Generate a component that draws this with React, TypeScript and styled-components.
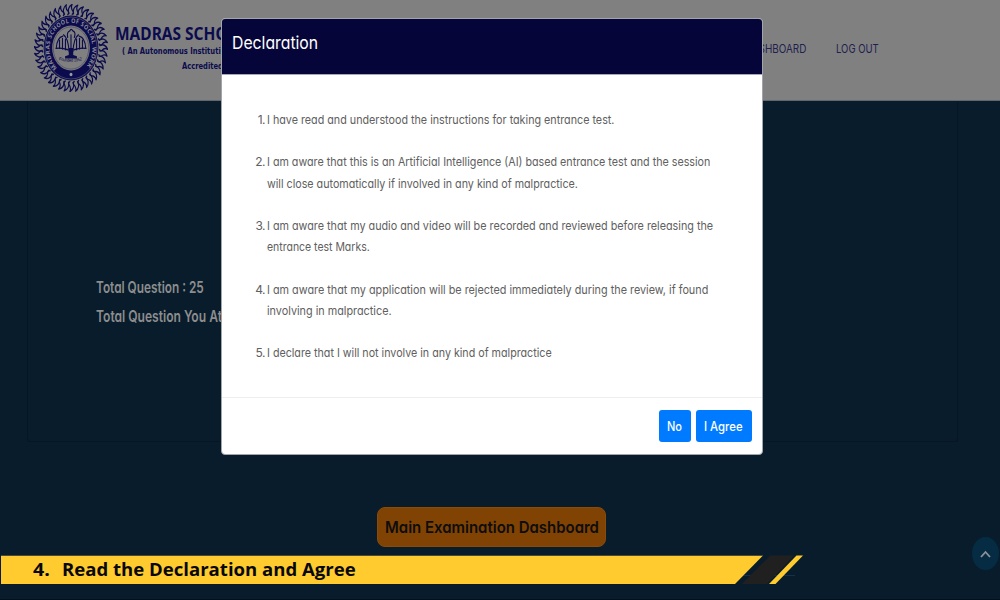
import React, { useLayoutEffect, useRef, useState } from "react";
import styled, { createGlobalStyle } from "styled-components";

const navy = "#0b0b4d";

const GlobalStyle = createGlobalStyle`
  *, *::before, *::after { box-sizing: border-box; }
  body { margin: 0; background: #081c2c; }
`;

const Page = styled.div`
  position: relative;
  width: 1000px;
  height: 600px;
  overflow: hidden;
  display: flex;
  flex-direction: column;
  background: #081c2c;
  border-bottom: 1px solid #030f1c;
  font-family: Inter, "Liberation Sans", sans-serif;
  font-feature-settings: "cv11" 1;
`;

/* Text set to a fixed measure by condensing the glyphs horizontally */
const Measure = styled.span<{ $width: number }>`
  display: block;
  width: ${(p) => p.$width}px;
  white-space: nowrap;
`;
const Glyphs = styled.span`
  display: inline-block;
  transform-origin: 0 50%;
`;

function Fit({ width, children }: { width: number; children: string }) {
  const ref = useRef<HTMLSpanElement>(null);
  const [scale, setScale] = useState(1);
  useLayoutEffect(() => {
    const update = () => {
      if (ref.current) setScale(width / ref.current.offsetWidth);
    };
    update();
    document.fonts?.ready.then(update);
  }, [width, children]);
  return (
    <Measure $width={width}>
      <Glyphs ref={ref} style={{ transform: `scaleX(${scale})` }}>
        {children}
      </Glyphs>
    </Measure>
  );
}

const Header = styled.header`
  flex: none;
  height: 101px;
  display: flex;
  align-items: flex-start;
  background: #808080;
  border-bottom: 1px solid #5f686e;
  padding-left: 34px;
`;

const EmblemSvg = styled.svg`
  flex: none;
  width: 74px;
  height: 88px;
  margin-top: 4px;
`;

const School = styled.div`
  flex: none;
  width: 115px;
  margin: 23px 0 0 7px;
  color: ${navy};
  font-family: "Noto Sans", "Open Sans", sans-serif;
  font-weight: 700;
`;
const SchoolName = styled.div`
  font-size: 18.5px;
  line-height: 20px;
`;
const SchoolNote = styled.div<{ $indent: number; $gap: number }>`
  margin: ${(p) => p.$gap}px 0 0 ${(p) => p.$indent}px;
  font-family: "DejaVu Sans Condensed", "DejaVu Sans", sans-serif;
  font-size: 9.5px;
  line-height: 12px;
`;

const Nav = styled.nav`
  display: flex;
  gap: 30px;
  margin: 41px 0 0 515px;
  color: #20204f;
  font-size: 11.5px;
  line-height: 16px;
`;

const Card = styled.section`
  flex: none;
  width: 931px;
  height: 341px;
  margin-left: 27px;
  padding: 172px 0 0 68px;
  border: 1px solid #071624;
  border-top: 0;
  border-radius: 0 0 3px 3px;
  color: #8d8d8d;
  font-size: 16px;
  font-weight: 600;
  line-height: 29px;
`;

const ExamButton = styled.button`
  flex: none;
  width: 229px;
  height: 40px;
  margin: 65px 0 0 377px;
  padding: 0 0 0 7px;
  border: 1px solid #8c4a06;
  border-radius: 8px;
  background: #804303;
  color: #0e0d0d;
  font: 600 16.5px/39px Inter, sans-serif;
  font-feature-settings: inherit;
  text-align: left;
`;

const ScrollTop = styled.div`
  position: absolute;
  left: 972px;
  top: 537px;
  width: 27px;
  height: 33px;
  border-radius: 50%;
  background: #052c42;
  display: flex;
  align-items: center;
  justify-content: center;
`;

const Dialog = styled.div`
  position: absolute;
  left: 221px;
  top: 18px;
  width: 542px;
  height: 437px;
  display: flex;
  flex-direction: column;
  overflow: hidden;
  border: 1px solid #a3a5ac;
  border-radius: 4px;
  background: #fff;
`;
const DialogHead = styled.div`
  flex: none;
  height: 56px;
  padding: 12px 0 0 10px;
  border-bottom: 1px solid #a6a6bd;
  background: #05053a;
  color: #fff;
  font-size: 17.5px;
  line-height: 24px;
`;
const DialogBody = styled.div`
  flex: 1;
  padding: 34px 0 0 29px;
  color: #606060;
  font-size: 12.3px;
  line-height: 21.2px;
`;
const Clause = styled.div`
  display: flex;
  gap: 2px;
  margin-bottom: 21.2px;
`;
const Numeral = styled.div`
  width: 14px;
  font-size: 12px;
  letter-spacing: -0.5px;
  text-align: right;
`;
const DialogFoot = styled.div`
  flex: none;
  height: 57px;
  display: flex;
  justify-content: flex-end;
  align-items: flex-start;
  gap: 5px;
  padding: 12px 10px 0 0;
  border-top: 1px solid #eceeef;
`;
const Action = styled.button<{ $width: number }>`
  width: ${(p) => p.$width}px;
  height: 32px;
  padding: 1px 0 0 8px;
  border: 0;
  border-radius: 3px;
  background: #007bff;
  color: #fff;
  font: 500 12.5px/31px Inter, sans-serif;
  font-feature-settings: inherit;
  text-align: left;
`;

const Caption = styled.div`
  position: absolute;
  left: 1px;
  top: 555px;
  display: flex;
`;
const CaptionBar = styled.div`
  width: 734px;
  height: 29px;
  display: flex;
  gap: 12px;
  padding-left: 32px;
  border-top: 1px solid #4c4a33;
  background: #ffcb2f;
  color: #080808;
  font: 700 18.5px/26px "Open Sans", "Noto Sans", sans-serif;
`;

const clauses: { text: string; width: number }[][] = [
  [{ text: "I have read and understood the instructions for taking entrance test.", width: 347 }],
  [
    { text: "I am aware that this is an Artificial Intelligence (AI) based entrance test and the session", width: 443 },
    { text: "will close automatically if involved in any kind of malpractice.", width: 311 },
  ],
  [
    { text: "I am aware that my audio and video will be recorded and reviewed before releasing the", width: 446.5 },
    { text: "entrance test Marks.", width: 103 },
  ],
  [
    { text: "I am aware that my application will be rejected immediately during the review, if found", width: 441 },
    { text: "involving in malpractice.", width: 125 },
  ],
  [{ text: "I declare that I will not involve in any kind of malpractice", width: 284.5 }],
];

const flames = Array.from({ length: 40 }, (_, i) => i * 9);

function Emblem() {
  return (
    <EmblemSvg viewBox="0 0 200 200" preserveAspectRatio="none">
      <defs>
        <path id="ring" d="M62.5 145 A58 58 0 1 1 137.5 145" />
        <path id="bowl" d="M67 127 Q100 136 133 127" />
      </defs>
      {flames.map((a) => (
        <path
          key={a}
          transform={`rotate(${a} 100 100)`}
          d="M95 23 C90 14 94 5 103 1 C99 8 101 12 106 17 C107 20 105 23 102 24"
          fill="none"
          stroke={navy}
          strokeWidth="3.2"
          strokeLinejoin="round"
        />
      ))}
      <circle cx="100" cy="100" r="74" fill={navy} />
      <circle cx="100" cy="100" r="70.5" fill="none" stroke="#777785" strokeWidth="1.2" />
      <circle cx="100" cy="100" r="51" fill="#808080" />
      <circle cx="100" cy="100" r="48" fill="none" stroke={navy} strokeWidth="0.8" />
      <text fontFamily="Open Sans, sans-serif" fontSize="14.5" fontWeight="700" fill="#8c8c98">
        <textPath href="#ring" textLength="276">MADRAS SCHOOL OF SOCIAL WORK</textPath>
      </text>
      <circle cx="100" cy="160" r="4" fill="#9a9aa4" />
      <g fill="none" stroke={navy} strokeWidth="3" strokeLinecap="round">
        <path d="M100 112 V70 M95 108 C93 88 88 74 80 70 M105 108 C107 88 112 74 120 70" />
        <path d="M91 76 Q88 63 97 61 Q100 54 105 61 Q114 64 109 76" />
        <path d="M78 73 Q62 76 60 101 M122 73 Q138 76 140 101" />
        <path d="M69 82 V101 M77 78 V102 M85 80 V104 M115 80 V104 M123 78 V102 M131 82 V101" />
        <path d="M60 101 Q74 99 92 104 M140 101 Q126 99 108 104" />
      </g>
      <path d="M94 100 H106 V116 L116 119 V124 H84 V119 L94 116Z" fill={navy} />
      <text fontFamily="Liberation Sans, sans-serif" fontSize="10.5" fill={navy}>
        <textPath href="#bowl" textLength="64">Founded 1952</textPath>
      </text>
    </EmblemSvg>
  );
}

export default function App() {
  return (
    <Page>
      <GlobalStyle />
      <Header>
        <Emblem />
        <School>
          <SchoolName><Fit width={113}>MADRAS SCHO</Fit></SchoolName>
          <SchoolNote $indent={7} $gap={2}><Fit width={99}>( An Autonomous Instituti</Fit></SchoolNote>
          <SchoolNote $indent={67} $gap={3}><Fit width={41}>Accredited</Fit></SchoolNote>
        </School>
        <Nav>
          <Fit width={61}>DASHBOARD</Fit>
          <Fit width={43}>LOG OUT</Fit>
        </Nav>
      </Header>
      <Card>
        <Fit width={108}>Total Question : 25</Fit>
        <Fit width={126}>Total Question You At</Fit>
      </Card>
      <ExamButton><Fit width={214}>Main Examination Dashboard</Fit></ExamButton>
      <ScrollTop>
        <svg width="11" height="8" viewBox="0 0 11 8" fill="none" stroke="#8c9398" strokeWidth="1.8">
          <path d="M1 7 L5.5 2 L10 7" />
        </svg>
      </ScrollTop>
      <Dialog>
        <DialogHead><Fit width={86.5}>Declaration</Fit></DialogHead>
        <DialogBody>
          {clauses.map((lines, i) => (
            <Clause key={i}>
              <Numeral>{i + 1}.</Numeral>
              <div>
                {lines.map((l) => <Fit key={l.text} width={l.width}>{l.text}</Fit>)}
              </div>
            </Clause>
          ))}
        </DialogBody>
        <DialogFoot>
          <Action $width={32}><Fit width={15}>No</Fit></Action>
          <Action $width={56}><Fit width={39}>I Agree</Fit></Action>
        </DialogFoot>
      </Dialog>
      <Caption>
        <CaptionBar>
          <Fit width={17}>4.</Fit>
          <Fit width={294}>Read the Declaration and Agree</Fit>
        </CaptionBar>
        <svg width="70" height="29" viewBox="0 0 70 29">
          <path d="M8 20.5 H60" stroke="#14304f" />
          <path d="M0 1 H27.5 L0 29Z" fill="#ffcb2f" />
          <path d="M0 0.5 H28" stroke="#4c4a33" />
          <path d="M35 0.5 H59 L32 29 H7Z" fill="#202020" />
          <path d="M61.5 0.5 H68 L40.5 29 H34Z" fill="#ffcb2f" />
        </svg>
      </Caption>
    </Page>
  );
}
